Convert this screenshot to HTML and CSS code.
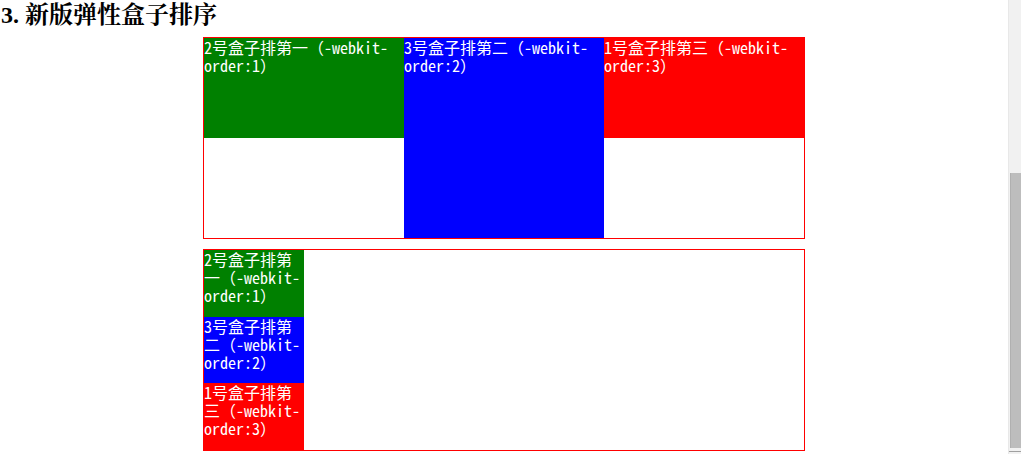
FILE: index.html
```html
<!DOCTYPE html>
<html lang="zh-CN">
<head>
    <meta charset="UTF-8">
    <meta name="viewport" content="width=device-width, initial-scale=1.0">
    <title>弹性盒子排序</title>
    <link rel="stylesheet" href="styles.css">
</head>
<body>
    <div class="page">
        <h2 class="title">3. 新版弹性盒子排序</h2>

        <!-- 横向排列 -->
        <div class="flex-box row">
            <div class="box box-1">1号盒子排第三（-webkit-order:3）</div>
            <div class="box box-2">2号盒子排第一（-webkit-order:1）</div>
            <div class="box box-3">3号盒子排第二（-webkit-order:2）</div>
        </div>

        <!-- 纵向排列 -->
        <div class="flex-box column">
            <div class="box box-1">1号盒子排第三（-webkit-order:3）</div>
            <div class="box box-2">2号盒子排第一（-webkit-order:1）</div>
            <div class="box box-3">3号盒子排第二（-webkit-order:2）</div>
        </div>
    </div>

    <div class="scrollbar">
        <div class="scroll-track"></div>
        <div class="scroll-thumb"></div>
        <div class="scroll-arrow"></div>
    </div>
</body>
</html>
```

FILE: styles.css
```css
/* styles.css */

html, body {
    margin: 0;
    height: 454px;
    overflow: hidden;
}

body {
    display: flex;
    background-color: #fff;
    font-family: "Noto Sans Mono CJK SC", "Noto Sans CJK SC", monospace;
    font-size: 16px;
    line-height: 18px;
}

.page {
    flex: 1;
}

.title {
    margin: 0 0 7px;
    padding-left: 1px;
    font-family: "Liberation Serif", "Noto Serif CJK SC", "Noto Sans CJK SC", serif;
    font-size: 24px;
    line-height: 30px;
    font-weight: bold;
    color: #000;
}

.flex-box {
    display: flex;
    width: 600px;
    height: 200px;
    margin: 0 auto 10px;
    border: 1px solid #f00;
}

.box {
    color: #fff;
}

.box-1 {
    order: 3;
    background-color: #f00;
}

.box-2 {
    order: 1;
    background-color: #008000;
}

.box-3 {
    order: 2;
    background-color: #00f;
}

/* row: boxes 200px wide, the middle one full height */
.row {
    align-items: flex-start;
}

.row .box {
    width: 200px;
    height: 100px;
}

.row .box-3 {
    height: 200px;
}

/* column: boxes share the height */
.column {
    flex-direction: column;
}

.column .box {
    width: 100px;
    flex: 1;
}

/* window scrollbar, scrolled down */
.scrollbar {
    width: 12px;
    display: flex;
    flex-direction: column;
    background-color: #f1f1f1;
    border-left: 1px solid #e8e8e8;
}

.scroll-track {
    height: 173px;
}

.scroll-thumb {
    flex: 1;
    margin: 0 0 0 1px;
    background-color: #bdbdbd;
    border-left: 1px solid #b0b0b0;
}

.scroll-arrow {
    height: 5px;
    margin-top: 1px;
    background: linear-gradient(to bottom, #f1f1f1 40%, #a0a0a0 40%, #a0a0a0 60%, #f1f1f1 60%);
}
```
